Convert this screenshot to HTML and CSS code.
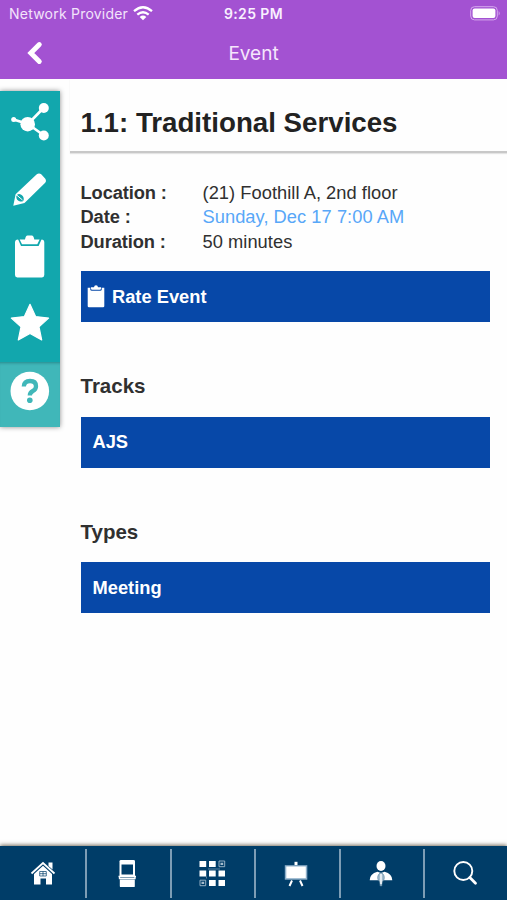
FILE: index.html
```html
<!DOCTYPE html>
<html lang="en">
<head>
<meta charset="utf-8">
<title>Event</title>
<link rel="stylesheet" href="styles.css">
</head>
<body>
<div class="app">
  <header class="header">
    <div class="status">
      <div class="carrier"><span class="carrier-name">Network Provider</span>
        <svg class="wifi" width="20" height="15" viewBox="0 0 20 15"><g fill="none" stroke="#fff" stroke-width="2.3"><path d="M1 5.2Q10-2.6 19 5.2"/><path d="M4.3 8.6Q10 3.9 15.7 8.6"/></g><path d="M6.7 10.9Q10 8.3 13.3 10.9L10 14.3z" fill="#fff"/></svg>
      </div>
      <div class="clock">9:25 PM</div>
      <svg class="battery" width="31" height="15" viewBox="0 0 31 15"><rect x=".7" y=".7" width="26.6" height="13.2" rx="3.8" fill="none" stroke="#d5a9ee" stroke-width="1"/><rect x="2.6" y="2.5" width="22.8" height="9.6" rx="2" fill="#fff"/><path d="M28.7 5q2 2.300 0 4.600z" fill="#d5a9ee"/></svg>
    </div>
    <div class="titlebar">
      <svg class="back" width="18" height="24" viewBox="0 0 18 24"><path d="M13.300 3.500L4.800 12l8.500 8.500" fill="none" stroke="#fff" stroke-width="4.900" stroke-linecap="round"/></svg>
      <h1>Event</h1>
      <span></span>
    </div>
  </header>

  <div class="body">
    <nav class="side">
      <a class="tool"><svg width="60" height="68" viewBox="0 0 60 68"><g stroke="#fff" stroke-width="2.700" fill="none"><path d="M13.500 28.500l14.500 4.500L44 16.500M28 33l16 11.500"/></g><g fill="#fff"><circle cx="13.700" cy="28.500" r="2.500"/><circle cx="27.700" cy="33.200" r="7.300"/><circle cx="43.800" cy="17" r="5"/><circle cx="43.800" cy="44.500" r="5"/></g></svg></a>
      <a class="tool"><svg width="60" height="68" viewBox="0 0 60 68"><path d="M13.300 46.800l2.300-11.500L36.500 15.500q2.500-2 5 0l3.800 4.300q1.600 2.500-.6 4.500L24.500 44.100z" fill="#fff"/><path d="M16.300 37.300q1-2.800 3.900-2 3.300 1 3.600 4.600-.2 3.300-3.700 2.600-3.900-.900-3.800-5.200z" fill="#12a7ad"/><path d="M16 35.500l6.500 5.500" stroke="#fff" stroke-width="1"/></svg></a>
      <a class="tool"><svg width="60" height="68" viewBox="0 0 60 68"><g transform="translate(0 -1.400)"><path d="M15 17q0-3 3-3h23.500q2.800 0 2.800 3v32.500q0 2.300-2.300 2.300H17.300q-2.300 0-2.300-2.300z" fill="#fff"/><path d="M17.800 13.200h24L38.600 20.500H21z" fill="#12a7ad"/><path d="M19.700 13.800h5.300q.7-3.800 2.500-3.800h4.300q1.800 0 2.500 3.800h5.300l-2.300 4.800H22z" fill="#fff"/></g></svg></a>
      <a class="tool"><svg width="60" height="68" viewBox="0 0 60 68"><path d="M30 10.300l5.600 12.300 13 1.500-9.600 8.800 2.700 13-11.700-6.400-11.700 6.400 2.700-13-9.700-8.800 13.100-1.500z" fill="#fff" stroke="#fff" stroke-width="1.200" stroke-linejoin="round"/></svg></a>
      <a class="tool active"><svg width="60" height="65" viewBox="0 0 60 65"><circle cx="29.800" cy="29" r="19.300" fill="#fff"/><path d="M23.800 24.500q.3-5.500 6.200-5.500 6 0 6 5.200 0 3.200-3.200 4.800-3 1.600-3 4.600" fill="none" stroke="#40b7b9" stroke-width="4.300"/><circle cx="29.800" cy="38.300" r="2.800" fill="#40b7b9"/></svg></a>
    </nav>

    <main class="content">
      <h2 class="name">1.1: Traditional Services</h2>
      <div class="details">
        <dl class="facts">
          <dt>Location :</dt><dd>(21) Foothill A, 2nd floor</dd>
          <dt>Date :</dt><dd class="date">Sunday, Dec 17 7:00 AM</dd>
          <dt>Duration :</dt><dd>50 minutes</dd>
        </dl>
        <a class="bar rate"><svg width="18" height="23" viewBox="0 0 18 23"><path d="M.7 2.800h16.600V21q0 1.300-1.300 1.300H2Q.7 22.300.7 21z" fill="#fff"/><path d="M3.300 2.300v2q0 1.500 1.500 1.500h8.400q1.500 0 1.500-1.500v-2" fill="#0748a8"/><path d="M4 2.200h3Q7.200.3 9 .3t2 1.900h3v1.300q0 1.200-1.200 1.200H5.200Q4 4.700 4 3.500z" fill="#fff"/></svg><span>Rate Event</span></a>
        <h3>Tracks</h3>
        <a class="bar"><span>AJS</span></a>
        <h3>Types</h3>
        <a class="bar"><span>Meeting</span></a>
      </div>
    </main>
  </div>

  <footer class="tabs">
    <a class="tab"><svg width="28" height="28" viewBox="0 0 28 28"><path d="M19.500 3.500h4v7l-4-3.500z" fill="#fff"/><path d="M2.500 14.500L14 4l11.500 10.500" fill="none" stroke="#fff" stroke-width="1.800"/><path d="M5 15l9-8.200L23 15v10.500h-6v-6h-5.500v6H5z" fill="#fff"/><path d="M10.700 12.500h6.600v4.500h-6.600zM14 12.500v4.500M10.700 14.700h6.600" stroke="#003d68" fill="none" stroke-width=".7"/></svg></a>
    <a class="tab"><svg width="28" height="28" viewBox="0 0 28 28"><path d="M6.500 17V2.300Q6.500 1 8 1h12.500Q22 1 22 2.300V17" fill="#fff"/><path d="M8.500 5.500h11.500v10H8.500z" fill="#003d68"/><path d="M5.500 17.500h17.500M6.500 18v1.500h15.500v-1.500" fill="none" stroke="#fff" stroke-width="1.300"/><path d="M6.800 20.500h15V27q0 1.500-1.500 1.500H8.300Q6.800 28.500 6.800 27z" fill="#fff"/></svg></a>
    <a class="tab"><svg width="28" height="28" viewBox="0 0 28 28"><g fill="#fff"><path d="M1.500 2h6.700v6H1.500zM11 2h6.700v6H11zM1.500 11.500h6.700v6H1.500zM11 11.500h6.700v6H11zM20.500 11.500h6.500v6h-6.500zM11 21h6.700v6H11zM20.500 21h6.500v6h-6.500z"/></g><g fill="none" stroke="#a5bccd" stroke-width=".9"><path d="M21 2h5.700v5.700H21zM2 21.200h5.700v5.500H2z"/><path d="M8.500 19.500v-2M10 10h12" opacity=".6"/></g><path d="M22.500 3.700h2.700v2.300h-2.700zM3.500 22.800h2.700v2.200H3.500z" fill="#a5bccd"/></svg></a>
    <a class="tab"><svg width="28" height="28" viewBox="0 0 28 28"><path d="M14 6.200V2.800" stroke="#fff" stroke-width="3"/><path d="M10 21.500L7.500 27M18 21.500l2.500 5.500" fill="none" stroke="#fff" stroke-width="2"/><path d="M2.800 6.200h22.500v14.500H2.800z" fill="#8eb0ca"/><path d="M4.300 7.500h19.500v11.700H4.300z" fill="#fff"/></svg></a>
    <a class="tab"><svg width="28" height="28" viewBox="0 0 28 28"><ellipse cx="14" cy="7" rx="4.500" ry="5" fill="#fff"/><path d="M2.700 21.200q0-6.500 7.700-8.500l3.600 1.300 3.600-1.300q7.700 2 7.700 8.500z" fill="#fff"/><path d="M14 13.500c3 1.500 3.700 4.500 3 6.800-.7 2-2 2-2 6.700h-2c0-4.700-1.300-4.700-2-6.700-.7-2.300 0-5.300 3-6.800z" fill="#a5becf" stroke="#40708f" stroke-width=".6"/><path d="M14 15v10" stroke="#fff" stroke-width="1.400"/></svg></a>
    <a class="tab"><svg width="28" height="28" viewBox="0 0 28 28"><circle cx="12.300" cy="12" r="9" fill="none" stroke="#fff" stroke-width="1.900"/><path d="M18.800 18.500l5.700 5.700" stroke="#fff" stroke-width="2.800" stroke-linecap="round"/></svg></a>
  </footer>
</div>
</body>
</html>
```

FILE: styles.css
```css
* { box-sizing: border-box; }

body {
  margin: 0;
  background: #fefefe;
  color: #303030;
  font-family: "Liberation Sans", Arial, sans-serif;
}

svg { display: block; flex: none; }

.app {
  display: flex;
  flex-direction: column;
  height: 900px;
  overflow: hidden;
}

.header {
  height: 79px;
  flex: none;
  background: #a352d2;
  color: #fff;
  font-family: Inter, "Liberation Sans", sans-serif;
}

.status {
  display: grid;
  grid-template-columns: 1fr auto 1fr;
  align-items: center;
  height: 27px;
  padding: 0 6px 0 9px;
  font-size: 14px;
}

.carrier { display: flex; align-items: center; gap: 5px; }
.carrier-name { color: #f3e4fb; letter-spacing: .22px; }
.clock { margin-right: 3px; font-weight: 600; letter-spacing: .4px; color: #f9f0ff; }
.battery { justify-self: end; }

.titlebar {
  display: grid;
  grid-template-columns: 1fr auto 1fr;
  align-items: center;
  height: 51px;
  padding: 0 26px;
}

.titlebar h1 {
  margin: 1px 0 0;
  font-size: 19px;
  font-weight: 400;
  color: #f5e6fc;
}

.body { display: flex; flex: 1; min-height: 0; }

.side {
  width: 60px;
  height: 336px;
  margin: 12px 10px 0 0;
  flex: none;
  background: #12a7ad;
  box-shadow: 0 0 5px rgba(0, 0, 0, .45);
}

.tool { display: block; height: 67.75px; }
.tool.active {
  height: 65px;
  background: #40b7b9;
  box-shadow: inset 0 3px 3px -2px rgba(0, 70, 75, .4);
}

.content { flex: 1; min-width: 0; }

.name {
  height: 74px;
  margin: 0;
  padding: 0 10.5px;
  border-bottom: 2px solid #c8c8c8;
  box-shadow: 0 1px 1px #e4e4e4;
  color: #222;
  font-size: 27.7px;
  line-height: 88px;
  white-space: nowrap;
}

.details { padding: 28px 17px 0 10.5px; }

.facts {
  display: grid;
  grid-template-columns: 122px 1fr;
  margin: 0;
  font-size: 18.3px;
  line-height: 24.4px;
  white-space: nowrap;
}

.facts dt { font-weight: 700; letter-spacing: -.1px; }
.facts dd { margin: 0; letter-spacing: .04px; }
.facts .date { color: #58a7f8; }

.bar {
  display: flex;
  align-items: center;
  height: 51px;
  padding: 0 12px;
  background: #0748a8;
  color: #fff;
  font-size: 18.3px;
  font-weight: 700;
}

.rate { gap: 7px; margin-top: 17px; padding-left: 6.500px; }

h3 {
  margin: 0;
  padding-top: 51px;
  height: 94.5px;
  font-size: 20.5px;
  line-height: 26px;
}

.tabs {
  display: grid;
  grid-template-columns: 85px 84.5px 84.5px 84.5px 84.5px 84px;
  height: 54px;
  flex: none;
  background: #003d68;
  box-shadow: 0 -1px 4px rgba(70, 60, 40, .75);
}

.tab {
  display: flex;
  justify-content: center;
  height: 49px;
  margin-top: 3px;
  padding-top: 10px;
}

.tab + .tab { padding-right: 2px; border-left: 2px solid #7d9db5; }
```
